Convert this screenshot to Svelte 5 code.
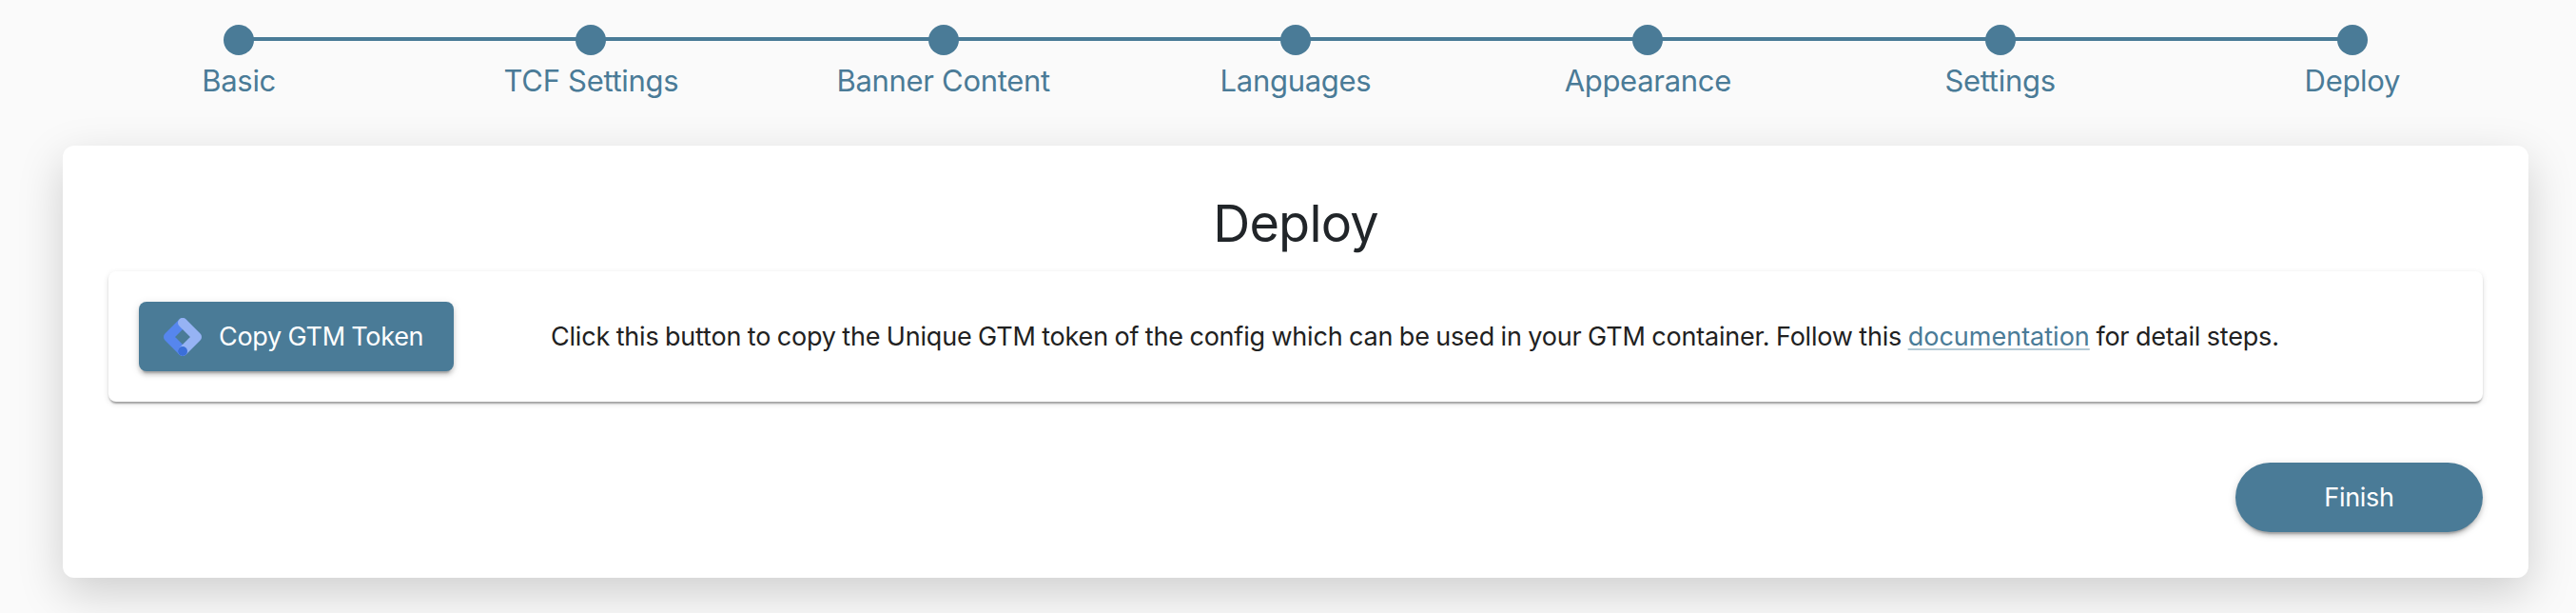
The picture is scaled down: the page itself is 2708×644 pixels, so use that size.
<script>
  const steps = ['Basic', 'TCF Settings', 'Banner Content', 'Languages', 'Appearance', 'Settings', 'Deploy'];
</script>

<main>
  <ol class="stepper">
    {#each steps as step}
      <li>
        <span class="track"><span class="dot"></span></span>
        <span class="label">{step}</span>
      </li>
    {/each}
  </ol>

  <section class="card">
    <h1>Deploy</h1>
    <div class="panel">
      <button class="copy">
        <svg width="40" height="40" viewBox="0 0 40 40" fill="none" stroke-width="10" stroke-linecap="round" stroke-linejoin="round" aria-hidden="true">
          <path d="M20 5 5 20 20 35" stroke="#5686ee" />
          <path d="M20 5 35 20 20 35" stroke="#96b3f4" />
          <circle cx="20" cy="35" r="5" fill="#3b6fd9" />
        </svg>
        <span>Copy GTM Token</span>
      </button>
      <p>Click this button to copy the Unique GTM token of the config which can be used in your GTM container. Follow this <a href="#documentation">documentation</a> for detail steps.</p>
    </div>
    <div class="actions"><button class="finish">Finish</button></div>
  </section>
</main>

<style>
  :global(body) { background: #fafafa; overflow: hidden; }
  main {
    box-sizing: border-box;
    height: 644px;
    padding: 26px 50px 0 66px;
    font-family: Inter, "Liberation Sans", sans-serif;
    color: #212529;
  }
  .stepper {
    display: grid;
    grid-template-columns: repeat(7, 1fr);
    height: 127px;
    margin: 0;
    padding: 0;
    list-style: none;
    color: #4a7b97;
  }
  li { display: flex; flex-direction: column; align-items: center; }
  .track {
    display: flex;
    justify-content: center;
    width: 100%;
    height: 32px;
    background: linear-gradient(#4a7b97, #4a7b97) 0 13px / 100% 4px no-repeat;
  }
  li:first-child .track { background-position: 100% 13px; background-size: 50% 4px; }
  li:last-child .track { background-size: 50% 4px; }
  .dot { width: 32px; height: 32px; border-radius: 50%; background: #4a7b97; }
  .label { margin-top: 7px; font-size: 31px; line-height: 40px; letter-spacing: -0.3px; white-space: nowrap; }
  .card {
    box-sizing: border-box;
    height: 454px;
    padding: 48px;
    border-radius: 12px;
    background: #fff;
    box-shadow: 0 16px 48px rgba(0, 0, 0, .176);
  }
  h1 { margin: 0; height: 84px; font-size: 54px; line-height: 68px; font-weight: 400; text-align: center; letter-spacing: -0.8px; }
  .panel {
    box-sizing: border-box;
    display: flex;
    align-items: center;
    height: 137px;
    padding: 0 32px;
    border-radius: 8px;
    background: #fff;
    box-shadow: 0 4px 2px -2px rgba(0, 0, 0, .2), 0 2px 2px rgba(0, 0, 0, .14), 0 2px 6px rgba(0, 0, 0, .12);
  }
  button {
    border: 0;
    color: #fff;
    background: #4a7b97;
    font: 400 27px/36px Inter, "Liberation Sans", sans-serif;
    letter-spacing: -0.3px;
    box-shadow: 0 6px 2px -4px rgba(0, 0, 0, .2), 0 4px 4px rgba(0, 0, 0, .14), 0 2px 10px rgba(0, 0, 0, .12);
  }
  .copy {
    display: flex;
    align-items: center;
    flex: none;
    width: 331px;
    height: 73px;
    padding: 0 0 0 26px;
    gap: 18px;
    border-radius: 8px;
    word-spacing: -0.7px;
    white-space: nowrap;
  }
  p {
    margin: 0 0 0 102px;
    font-size: 27px;
    line-height: 40px;
    letter-spacing: -0.2px;
    word-spacing: -0.8px;
    color: #212121;
    white-space: nowrap;
  }
  a {
    color: #4a7b97;
    letter-spacing: 0;
    text-decoration: underline 2px #b5cad5;
    text-underline-offset: 3px;
    text-decoration-skip-ink: none;
  }
  .actions { display: flex; justify-content: flex-end; padding-top: 64px; }
  .finish { width: 260px; height: 73px; border-radius: 37px; padding: 0; }
</style>
